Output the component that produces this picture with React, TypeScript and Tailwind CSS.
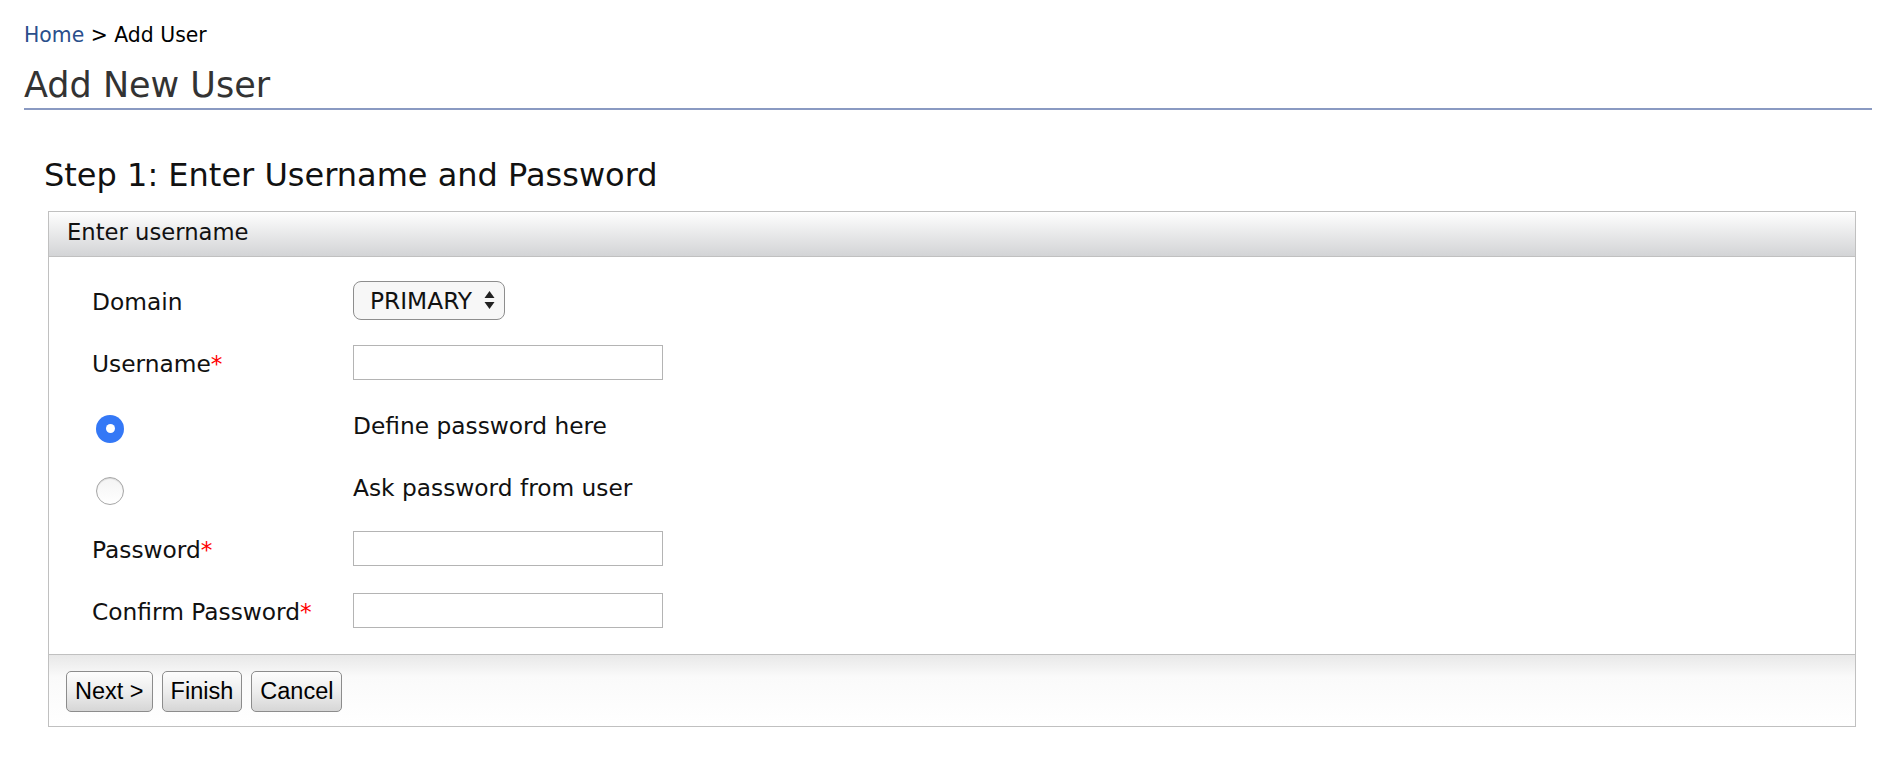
import React from 'react'

// field rows of the first wizard step
const fieldRows = [
  { kind: 'select', label: 'Domain' },
  { kind: 'input', label: 'Username', required: true },
  { kind: 'radio', label: 'Define password here', checked: true },
  { kind: 'radio', label: 'Ask password from user', checked: false },
  { kind: 'input', label: 'Password', required: true },
  { kind: 'input', label: 'Confirm Password', required: true },
]

function Radio({ checked }: { checked: boolean }) {
  if (checked) {
    return (
      <span className="ml-1 mt-[9px] flex h-[28px] w-[28px] items-center justify-center rounded-full bg-[#3478f6]">
        <span className="h-[9px] w-[9px] rounded-full bg-white" />
      </span>
    )
  }
  return (
    <span className="ml-1 mt-[9px] block h-[28px] w-[28px] rounded-full border border-[#a6a6a6] bg-gradient-to-b from-[#f4f4f4] to-white shadow-[inset_0_1px_1px_rgba(0,0,0,0.12)]" />
  )
}

function SelectBox() {
  return (
    <div className="flex h-[39px] w-[152px] items-center justify-between rounded-[8px] border-[1.5px] border-[#8e8e8e] bg-[#f7f7f7] pl-[16px] pr-[9px] text-[23.3px] text-[#111]">
      <span className="pt-[2px]">PRIMARY</span>
      <svg width="11" height="20" viewBox="0 0 11 20">
        <path d="M5.5 1 L10.5 8 L0.5 8 Z" fill="#222" />
        <path d="M5.5 19 L10.5 12 L0.5 12 Z" fill="#222" />
      </svg>
    </div>
  )
}

function Button({ children }: { children: React.ReactNode }) {
  return (
    <button className="h-[41px] rounded-[5px] border border-[#8c8c8c] bg-gradient-to-b from-[#fdfdfd] via-[#ededed] to-[#d6d6d6] px-[8px] font-['Liberation_Sans',Arial,sans-serif] text-[23.5px] text-black">
      {children}
    </button>
  )
}

export default function App() {
  return (
    <div className="min-h-screen bg-white pl-6 pr-7 pt-[23px] font-['DejaVu_Sans',Verdana,sans-serif] text-[#111]">
      {/* breadcrumb */}
      <div className="text-[20.4px] leading-[24px] text-black">
        <a className="text-[#2a4f8c]">Home</a> &gt; Add User
      </div>

      {/* page title */}
      <h1 className="mt-[18px] border-b-2 border-[#8a9ac2] pb-[3px] text-[35px] leading-[40px] text-[#333]">
        Add New User
      </h1>

      <h2 className="mt-[47px] pl-5 text-[32px] leading-[36px] text-[#111]">
        Step 1: Enter Username and Password
      </h2>

      {/* wizard panel */}
      <div className="ml-6 mr-4 mt-[18px] border border-[#c0c0c0]">
        <div className="h-[45px] border-b border-[#c0c0c0] bg-gradient-to-b from-[#fefefe] to-[#d3d4d6] pl-[18px] text-[22.7px] leading-[40px] text-[#111]">
          Enter username
        </div>

        <div className="pb-[13px] pl-[43px] pt-[12px]">
          {fieldRows.map((row, i) => (
            <div key={i} className="flex h-[62px] items-center text-[23.3px]">
              <div className="flex w-[261px] items-center">
                {row.kind === 'radio' ? (
                  <Radio checked={!!row.checked} />
                ) : (
                  <span className="pt-[5px]">
                    {row.label}
                    {row.required && <span className="text-[#f00]">*</span>}
                  </span>
                )}
              </div>
              <div>
                {row.kind === 'select' && <SelectBox />}
                {row.kind === 'input' && (
                  <input className="block h-[35px] w-[310px] border border-[#b4b4b4] bg-white" />
                )}
                {row.kind === 'radio' && <span className="block pt-[5px]">{row.label}</span>}
              </div>
            </div>
          ))}
        </div>

        {/* buttons */}
        <div className="flex h-[72px] gap-[9px] border-t border-[#c0c0c0] bg-[linear-gradient(to_bottom,#e8e8e8,#fafafa_22px,#ffffff)] pl-[17px] pt-[16px]">
          <Button>Next &gt;</Button>
          <Button>Finish</Button>
          <Button>Cancel</Button>
        </div>
      </div>
    </div>
  )
}
